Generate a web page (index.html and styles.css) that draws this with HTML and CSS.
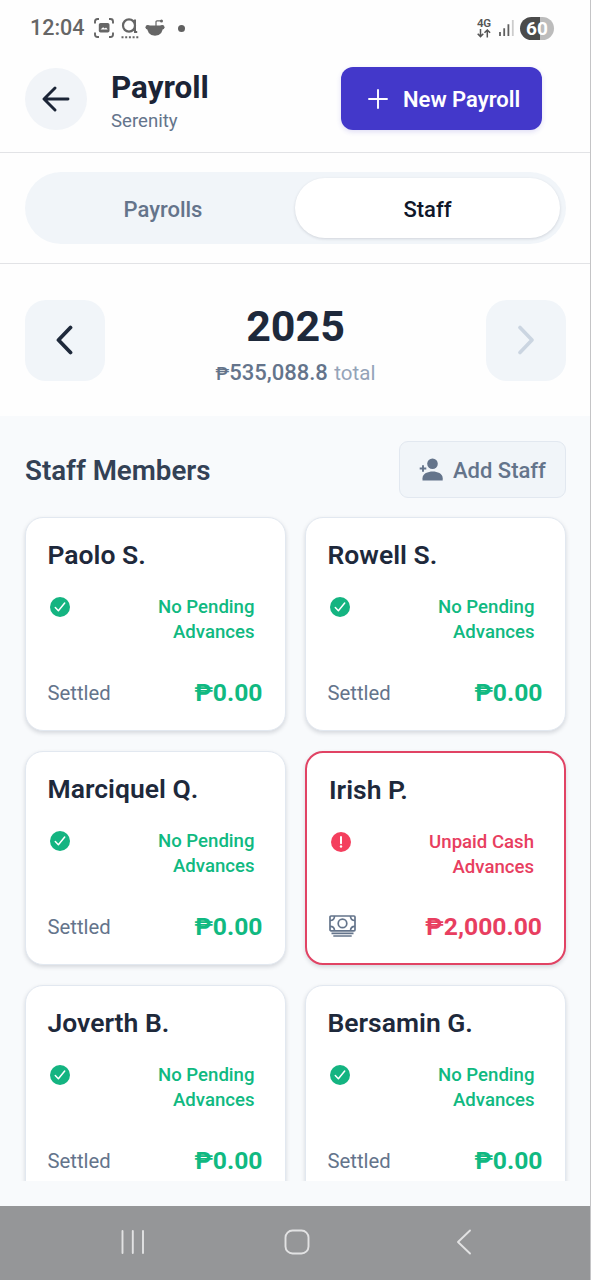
FILE: index.html
```html
<!DOCTYPE html>
<html lang="en">
<head>
<meta charset="utf-8">
<title>Payroll</title>
<link rel="stylesheet" href="styles.css">
</head>
<body>
<svg width="0" height="0" class="defs" aria-hidden="true">
  <symbol id="check" viewBox="0 0 20 20"><circle cx="10" cy="10" r="10" fill="#14b481"/><path d="M5.3 10.6l3.1 3.2L14.7 6" fill="none" stroke="#fff" stroke-width="1.5" stroke-linecap="round" stroke-linejoin="round"/></symbol>
</svg>
<div class="phone">
  <div class="status">
    <span class="time">12:04</span>
    <svg class="s-shot" width="20" height="20" viewBox="0 0 20 20"><path d="M1 5.500V3.5Q1 1 3.5 1H5M15 1h1.500Q19 1 19 3.500V5.500M19 14.500v2Q19 19 16.500 19H15M5 19H3.500Q1 19 1 16.500V14.500" fill="none" stroke="#666" stroke-width="1.900"/><rect x="4.800" y="5" width="10.700" height="9.500" rx="1.800" fill="#666"/><path d="M6.500 11.500l2.600-2.300 1.700 1.200 1.200-1 1.800 2.100z" fill="#fff"/></svg>
    <svg class="s-a" width="18" height="21" viewBox="0 0 18 21"><ellipse cx="8" cy="7.500" rx="6" ry="6.200" fill="none" stroke="#666" stroke-width="2.200"/><path d="M14 1.500v12.500h2.200" fill="none" stroke="#666" stroke-width="2"/><path d="M.5 19.300h17" stroke="#666" stroke-width="2" stroke-dasharray="2 1.700"/></svg>
    <svg class="s-bowl" width="20" height="18" viewBox="0 0 20 18"><path d="M2.200 6.500h15.600q.6 10-7.800 10.300Q1.600 16.500 2.200 6.500z" fill="#666"/><circle cx="2.700" cy="8.300" r="2.200" fill="#666"/><circle cx="17.300" cy="8.300" r="2.200" fill="#666"/><path d="M11 7V2.800q0-1 1-1h4" fill="none" stroke="#666" stroke-width="1.200"/><circle cx="16.500" cy="2" r="1.500" fill="#666"/></svg>
    <i class="dot"></i>
    <div class="net"><span>4G</span><svg width="14" height="9" viewBox="0 0 14 9"><path d="M3.500 0v7.500M.700 4.800l2.800 2.800 2.800-2.800M10.300 8.500V1M7.500 3.800L10.300 1l2.800 2.800" fill="none" stroke="#555" stroke-width="1.500"/></svg></div>
    <svg class="bars" width="15" height="16" viewBox="0 0 15 16"><path d="M1 12v4M5.200 8.300V16M9.400 4.300V16" stroke="#606060" stroke-width="1.800"/><path d="M13.800 0v16" stroke="#ccc" stroke-width="1.800"/></svg>
    <span class="battery">60</span>
  </div>
  <header class="header">
    <div class="back"><svg width="28" height="26" viewBox="0 0 28 26"><path d="M13 2L2 13l11 11M2.500 13H26" fill="none" stroke="#1b2436" stroke-width="2.900" stroke-linecap="round" stroke-linejoin="round"/></svg></div>
    <div class="titles"><h1>Payroll</h1><p>Serenity</p></div>
    <div class="new"><svg width="20" height="20" viewBox="0 0 20 20"><path d="M10 1v18M1 10h18" stroke="#fff" stroke-width="1.900" stroke-linecap="round"/></svg><span>New Payroll</span></div>
  </header>
  <nav class="tabs"><div class="track"><div class="tab"><span>Payrolls</span></div><div class="tab active"><span>Staff</span></div></div></nav>
  <section class="year">
    <div class="step"><svg width="18" height="30" viewBox="0 0 18 30"><path d="M14.500 2.500L2.500 15 14.500 27.500" fill="none" stroke="#1e293b" stroke-width="3.800" stroke-linecap="round" stroke-linejoin="round"/></svg></div>
    <div class="sum"><h2>2025</h2><p><b><i class="peso">₱</i>535,088.8</b><span>total</span></p></div>
    <div class="step"><svg width="18" height="30" viewBox="0 0 18 30"><path d="M4 2.500L16 15 4 27.500" fill="none" stroke="#cbd5e1" stroke-width="3.600" stroke-linecap="round" stroke-linejoin="round"/></svg></div>
  </section>
  <main class="staff">
    <div class="bar"><h3>Staff Members</h3>
      <div class="add"><svg width="24" height="23" viewBox="0 0 24 23"><circle cx="13.500" cy="5.700" r="5.300" fill="#64748b"/><path d="M3.500 22.500v-2.300c0-4.600 5.500-6.700 10.200-6.700s10 2.100 10 6.700v2.300z" fill="#64748b"/><path d="M4 7.200v6.600M.700 10.500h6.600" stroke="#64748b" stroke-width="1.900"/></svg><span>Add Staff</span></div>
    </div>
    <div class="grid">
      <article class="card"><h4>Paolo S.</h4><div class="state"><svg width="20" height="20"><use href="#check"/></svg><p>No Pending<br>Advances</p></div><div class="pay"><span class="lbl">Settled</span><b>₱0.00</b></div></article>
      <article class="card"><h4>Rowell S.</h4><div class="state"><svg width="20" height="20"><use href="#check"/></svg><p>No Pending<br>Advances</p></div><div class="pay"><span class="lbl">Settled</span><b>₱0.00</b></div></article>
      <article class="card"><h4>Marciquel Q.</h4><div class="state"><svg width="20" height="20"><use href="#check"/></svg><p>No Pending<br>Advances</p></div><div class="pay"><span class="lbl">Settled</span><b>₱0.00</b></div></article>
      <article class="card due"><h4>Irish P.</h4><div class="state"><svg width="20" height="20" viewBox="0 0 20 20"><circle cx="10" cy="10" r="10" fill="#f43f5e"/><path d="M10 5v6.300" stroke="#fff" stroke-width="2" stroke-linecap="round"/><circle cx="10" cy="14.500" r="1.200" fill="#fff"/></svg><p>Unpaid Cash<br>Advances</p></div><div class="pay"><svg class="cash" width="27" height="22" viewBox="0 0 27 22"><g fill="none" stroke="#64748b" stroke-width="1.700"><rect x="1" y="1" width="25" height="14.800" rx="1"/><circle cx="13.500" cy="8.400" r="4.300"/><path d="M1 5.500Q5.500 5.500 5.500 1M21.500 1Q21.500 5.500 26 5.500M1 11.300Q5.500 11.300 5.500 15.800M21.500 15.800Q21.500 11.300 26 11.300M2.500 18.400h22M4.300 21h18.400"/></g></svg><b>₱2,000.00</b></div></article>
      <article class="card"><h4>Joverth B.</h4><div class="state"><svg width="20" height="20"><use href="#check"/></svg><p>No Pending<br>Advances</p></div><div class="pay"><span class="lbl">Settled</span><b>₱0.00</b></div></article>
      <article class="card"><h4>Bersamin G.</h4><div class="state"><svg width="20" height="20"><use href="#check"/></svg><p>No Pending<br>Advances</p></div><div class="pay"><span class="lbl">Settled</span><b>₱0.00</b></div></article>
    </div>
  </main>
  <footer class="sysnav">
    <svg width="24" height="24" viewBox="0 0 24 24"><path d="M1.500 1v22M11.800 1v22M22 1v22" stroke="#e2e2e3" stroke-width="1.900" stroke-linecap="round"/></svg>
    <svg class="home" width="26" height="26" viewBox="0 0 26 26"><rect x="1.500" y="1.500" width="23" height="23" rx="7" fill="none" stroke="#e2e2e3" stroke-width="1.900"/></svg>
    <svg width="16" height="26" viewBox="0 0 16 26"><path d="M14 1.500L2 13l12 11.500" fill="none" stroke="#e2e2e3" stroke-width="1.900" stroke-linecap="round" stroke-linejoin="round"/></svg>
  </footer>
</div>
</body>
</html>
```

FILE: styles.css
```css
* { box-sizing: border-box; }
body { margin: 0; background: #fff; font-family: Roboto, "Liberation Sans", sans-serif; }
h1, h2, h3, h4, p { margin: 0; }
svg { display: block; flex: none; }
span, b { white-space: nowrap; }
.defs { position: absolute; }
.phone { width: 591px; height: 1280px; overflow: hidden; display: flex; flex-direction: column; background: #fefefe; border-right: 1px solid #c4c4c6; }

.status { height: 56px; padding: 0 36px 0 30px; display: flex; align-items: center; }
.time { width: 64px; font-size: 21.500px; font-weight: 500; color: #666; line-height: 56px; }
.s-a { margin-left: 7px; }
.s-bowl { margin-left: 6px; }
.dot { width: 7px; height: 7px; border-radius: 50%; background: #606060; margin-left: 13px; }
.net { margin-left: auto; width: 15px; height: 20px; font-size: 11.500px; font-weight: 600; color: #555; line-height: 10px; display: flex; flex-direction: column; justify-content: space-between; }
.net span { letter-spacing: -.3px; }
.bars { margin-left: 7px; }
.battery { margin-left: 6px; width: 34px; height: 23px; border-radius: 12px; background: linear-gradient(90deg, #4b4b4b 58%, #bcbcbc 58%); color: #fff; font-size: 19px; font-weight: 700; line-height: 23px; text-align: center; }

.header { height: 97px; border-bottom: 1px solid #e2e3e6; padding: 11px 48px 0 25px; display: flex; align-items: flex-start; }
.back { width: 62px; height: 62px; border-radius: 50%; background: #f1f4f8; display: flex; align-items: center; justify-content: center; margin: .5px 0 0 -.5px; }
.titles { margin-left: 24.500px; padding-top: 1px; }
h1 { font-size: 31.400px; line-height: 40px; font-weight: 700; color: #1b2436; }
.titles p { font-size: 18.600px; line-height: 26px; color: #64748b; }
.new { margin-left: auto; width: 201px; height: 63px; border-radius: 12px; background: #4338ca; box-shadow: 0 2px 5px rgba(67,56,202,.16); color: #fff; font-size: 22px; font-weight: 600; line-height: 63px; display: flex; align-items: center; padding-left: 27px; gap: 15px; }
.new span { line-height: 26px; padding-top: 2px; }

.tabs { height: 111px; border-bottom: 1px solid #e2e3e6; padding: 19px 24px 0 25px; }
.track { height: 72px; border-radius: 36px; background: #f1f5f9; display: flex; padding: 6px; }
.tab { width: 264px; height: 60px; border-radius: 30px; font-size: 22px; font-weight: 500; color: #64748b; text-align: center; line-height: 63px; }
.tab.active { width: 265px; color: #0f172a; background: #fff; box-shadow: 0 1px 3px rgba(15,23,42,.14); }

.year { height: 152px; padding: 36px 24px 0 25px; display: flex; justify-content: space-between; }
.step { width: 80px; height: 81px; border-radius: 21px; background: #f1f5f9; display: flex; align-items: center; justify-content: center; padding: 0 1px 2px 0; }
.sum { text-align: center; }
h2 { font-size: 43px; line-height: 52px; font-weight: 700; color: #1e293b; }
.sum p { font-size: 22px; line-height: 30px; margin-top: 6px; color: #94a3b8; display: flex; gap: 6.500px; }
.sum p span { font-size: 20.500px; }
.sum b { font-weight: 500; color: #64748b; }
.peso { font-style: normal; font-size: 18.500px; }

.staff { height: 790px; padding: 25px 24px 25px 25px; background: #f8fafc; display: flex; flex-direction: column; }
.bar { height: 57px; flex: none; display: flex; justify-content: space-between; align-items: center; }
h3 { font-size: 27.700px; font-weight: 600; color: #334155; line-height: 36px; padding-top: 2px; }
.add { width: 167px; height: 57px; border: 1.500px solid #e2e8f0; border-radius: 9px; background: #f1f5f9; color: #64748b; font-size: 22px; font-weight: 500; display: flex; align-items: center; padding-left: 19px; gap: 10px; }
.add span { padding-top: 2px; }
.grid { margin: 0 -10px 0; padding: 18.500px 10px 0; overflow: hidden; flex: 1; display: grid; grid-template-columns: 261px 261px; grid-auto-rows: 214.500px; gap: 19.500px 19px; }
.card { background: #fff; border: 1.500px solid #e2e8f0; border-radius: 18px; box-shadow: 0 2px 4px rgba(15,23,42,.15); padding: 20px 22.500px 0 21.500px; }
.card h4 { font-size: 26.500px; line-height: 34px; font-weight: 600; color: #1e293b; }
.state { display: flex; justify-content: space-between; align-items: flex-start; padding: 23px 8px 0 2px; height: 86px; }
.state svg { margin-top: 2px; }
.state p { text-align: right; font-size: 18.600px; line-height: 25px; font-weight: 500; color: #10b981; }
.pay { display: flex; justify-content: space-between; align-items: center; height: 34px; margin-top: 18px; }
.lbl { font-size: 20.300px; color: #64748b; }
.pay b { font-size: 24.700px; font-weight: 700; color: #10b981; }
.due { border: 2px solid #e14364; padding: 20px 22px 0; }
.due .pay { margin-top: 17px; }
.cash { margin-bottom: 2px; }
.due .state p, .due .pay b { color: #e83e60; }

.sysnav { height: 74px; width: 591px; background: #959698; display: flex; align-items: center; justify-content: space-between; padding: 0 119px 3px 121px; }
.home { margin-right: 7px; }
```
